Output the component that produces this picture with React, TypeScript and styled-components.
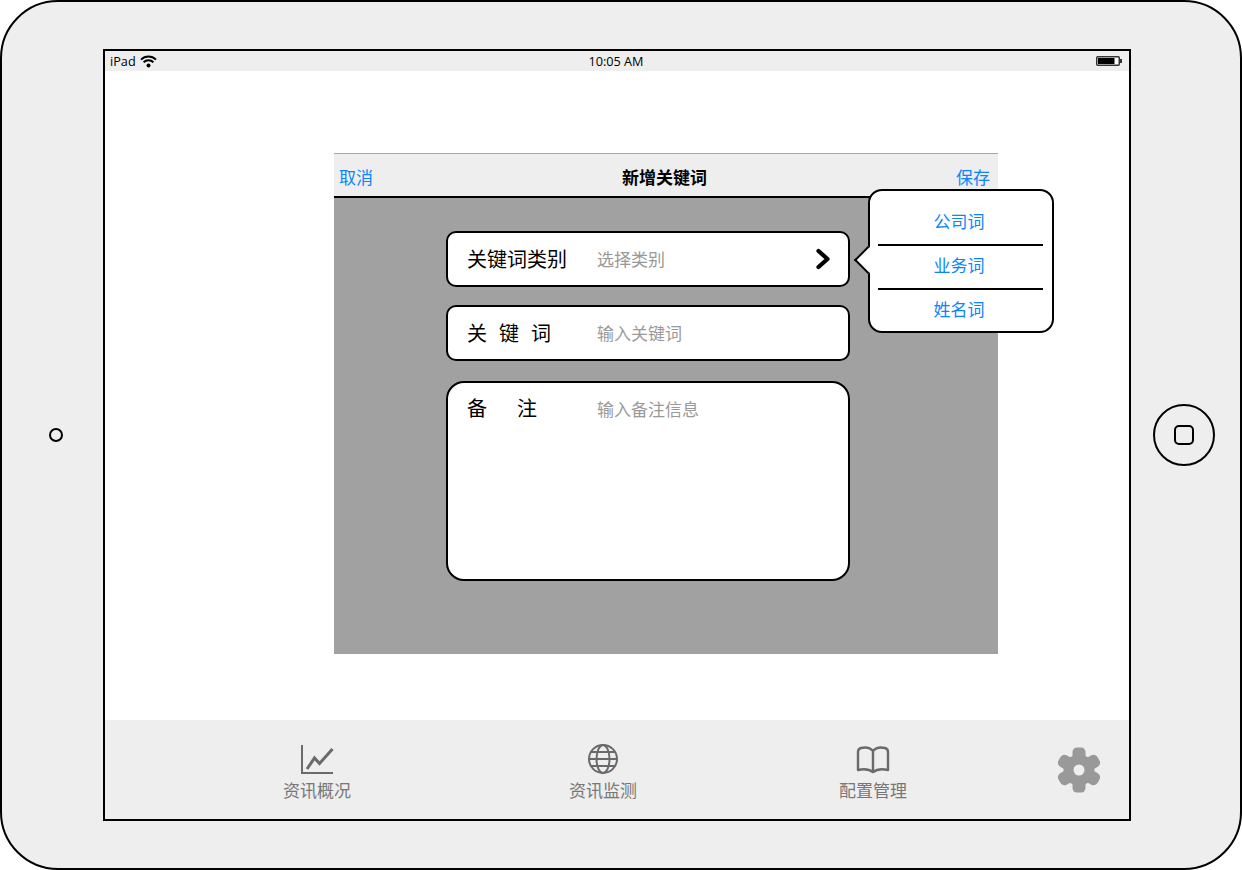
import React from "react";
import styled, { createGlobalStyle } from "styled-components";

const GlobalStyle = createGlobalStyle`
  html, body {
    margin: 0;
    padding: 0;
    background: #fff;
  }
  * {
    box-sizing: border-box;
  }
`;

const CJK = `"Noto Sans CJK SC", "Noto Sans", sans-serif`;

// Device frame
const Device = styled.div`
  width: 1242px;
  height: 870px;
  border: 2px solid #000;
  border-radius: 58px;
  background: #eee;
  display: grid;
  grid-template-columns: 101px 1028px 1fr;
  align-items: center;
  font-family: ${CJK};
  overflow: hidden;
`;

const SideLeft = styled.div`
  display: flex;
  justify-content: center;
  padding-left: 6px;
`;

const Hole = styled.div`
  width: 14px;
  height: 14px;
  border: 2px solid #000;
  border-radius: 50%;
`;

const SideRight = styled.div`
  display: flex;
  justify-content: center;
  padding-right: 4px;
`;

const HomeButton = styled.div`
  width: 62px;
  height: 62px;
  border: 2px solid #000;
  border-radius: 50%;
  display: flex;
  align-items: center;
  justify-content: center;
`;

const HomeSquare = styled.div`
  width: 20px;
  height: 20px;
  border: 2px solid #000;
  border-radius: 5px;
`;

const Screen = styled.div`
  position: relative;
  height: 772px;
  border: 2px solid #000;
  background: #fff;
  display: flex;
  flex-direction: column;
`;

// Status bar
const StatusBar = styled.div`
  height: 20px;
  background: #eee;
  padding: 0 7px 0 5px;
  display: grid;
  grid-template-columns: 1fr auto 1fr;
  align-items: center;
  font-family: "Open Sans", sans-serif;
  font-size: 12.7px;
  color: #000;
`;

const Carrier = styled.div`
  display: flex;
  align-items: center;
  gap: 4px;
`;

const Clock = styled.div`
  margin-right: 0;
`;

const BatteryWrap = styled.div`
  display: flex;
  justify-content: flex-end;
`;

// Main area
const Content = styled.div`
  flex: 1;
  padding: 82px 0 0 229px;
`;

const Dialog = styled.div`
  width: 664px;
  height: 501px;
  border-top: 1px solid #a6a6a6;
  background: #a1a1a1;
  display: flex;
  flex-direction: column;
`;

const DialogHeader = styled.div`
  height: 44px;
  flex: none;
  background: #eee;
  border-bottom: 2px solid #000;
  padding: 3px 8px 0 5px;
  display: flex;
  align-items: center;
  justify-content: space-between;
  font-size: 17px;
`;

const LinkText = styled.span`
  color: #0a84ff;
`;

const Title = styled.span`
  font-weight: 700;
  color: #000;
`;

const DialogBody = styled.div`
  flex: 1;
  padding: 33px 0 0 112px;
`;

const Field = styled.div<{ $tall?: boolean; $top?: number }>`
  width: 404px;
  height: ${({ $tall }) => ($tall ? "200px" : "56px")};
  margin-top: ${({ $top }) => $top ?? 0}px;
  padding: ${({ $tall }) => ($tall ? "10px 17px 0 19px" : "0 17px 0 19px")};
  background: #fff;
  border: 2px solid #000;
  border-radius: ${({ $tall }) => ($tall ? "18px" : "10px")};
  display: flex;
  align-items: ${({ $tall }) => ($tall ? "flex-start" : "center")};
`;

const Label = styled.span<{ $spacing?: number }>`
  width: 130px;
  flex: none;
  font-size: 20px;
  line-height: 30px;
  color: #000;
  letter-spacing: ${({ $spacing }) => $spacing ?? 0}px;
  white-space: nowrap;
`;

const Placeholder = styled.span`
  flex: 1;
  font-size: 17px;
  line-height: 32px;
  color: #999;
`;

// Popover menu over the dialog
const Popover = styled.div`
  position: absolute;
  left: 763px;
  top: 138px;
  width: 186px;
  height: 144px;
  padding: 11px 8px 0;
  background: #fff;
  border: 2px solid #000;
  border-radius: 14px;
`;

const PopoverArrow = styled.div`
  position: absolute;
  left: -12px;
  top: 59px;
  width: 20px;
  height: 20px;
  background: #fff;
  border-left: 2px solid #000;
  border-bottom: 2px solid #000;
  transform: rotate(45deg);
`;

const PopoverItem = styled.div<{ $last?: boolean }>`
  height: ${({ $last }) => ($last ? "38px" : "44px")};
  margin-right: 1px;
  padding-right: 3px;
  border-bottom: ${({ $last }) => ($last ? "none" : "2px solid #000")};
  display: flex;
  align-items: flex-start;
  justify-content: center;
  font-size: 17px;
  line-height: 38px;
  color: #0a84ff;
`;

// Tab bar
const TabBar = styled.div`
  height: 99px;
  flex: none;
  background: #eee;
  padding-left: 152px;
  display: flex;
  align-items: flex-start;
`;

const Tab = styled.div<{ $offset?: number }>`
  width: 120px;
  height: 100%;
  margin-left: ${({ $offset }) => $offset ?? 0}px;
  padding-top: 23px;
  display: flex;
  flex-direction: column;
  align-items: center;
  font-size: 17px;
  color: #777;
`;

const TabIcon = styled.svg`
  display: block;
  width: 34px;
  height: 32px;
`;

const TabLabel = styled.span`
  line-height: 24px;
  margin-top: 3px;
`;

const GearIcon = styled.svg`
  width: 44px;
  height: 46px;
  margin: 27px 0 0 124px;
  flex: none;
`;

const Wifi = () => (
  <svg width="17" height="13" viewBox="0 0 17 13">
    <path d="M1 4.6a10.6 10.6 0 0 1 15 0" fill="none" stroke="#000" strokeWidth="2" />
    <path d="M3.6 7.3a7 7 0 0 1 9.8 0" fill="none" stroke="#000" strokeWidth="2" />
    <circle cx="8.5" cy="10.6" r="2" fill="#000" />
  </svg>
);

const Battery = () => (
  <svg width="26" height="10" viewBox="0 0 26 10">
    <rect x="0.75" y="0.75" width="22.5" height="8.5" rx="1" fill="#fff" stroke="#333" strokeWidth="1.5" />
    <rect x="2" y="2" width="16.5" height="6" fill="#000" />
    <rect x="24" y="3" width="2" height="4" fill="#333" />
  </svg>
);

const Chevron = () => (
  <svg width="16" height="22" viewBox="0 0 16 22">
    <path d="M3.5 3 L12.5 11 L3.5 19" fill="none" stroke="#000" strokeWidth="4.2" strokeLinecap="round" strokeLinejoin="round" />
  </svg>
);

const ChartGlyph = () => (
  <TabIcon viewBox="0 0 34 32">
    <path d="M2 2 V30 H33" fill="none" stroke="#6a6a6a" strokeWidth="2" />
    <path d="M7 26 L14.5 15 L19.5 20.5 L32.5 6" fill="none" stroke="#6a6a6a" strokeWidth="3" />
  </TabIcon>
);

const GlobeGlyph = () => (
  <TabIcon viewBox="0 0 34 32">
    <g fill="none" stroke="#6a6a6a" strokeWidth="2">
      <circle cx="17" cy="16" r="14" />
      <ellipse cx="17" cy="16" rx="6.5" ry="14" />
      <path d="M3 16 H31 M5 9 H29 M5 23 H29" />
    </g>
  </TabIcon>
);

const BookGlyph = () => (
  <TabIcon viewBox="0 0 34 32">
    <path
      d="M17 8 C14 4.5 9 4 5 5 C3 5.5 2 7 2 9 V27 C8 25.5 13 26 17 29 C21 26 26 25.5 32 27 V9 C32 7 31 5.5 29 5 C25 4 20 4.5 17 8 V28"
      fill="none"
      stroke="#6a6a6a"
      strokeWidth="2.4"
      strokeLinejoin="round"
    />
  </TabIcon>
);

const Gear = () => (
  <GearIcon viewBox="0 0 44 46">
    <g fill="#999" transform="translate(22 23)">
      <circle r="15.5" />
      {[0, 60, 120, 180, 240, 300].map((angle) => (
        <rect key={angle} x="-6.5" y="-22.5" width="13" height="14" rx="4.5" transform={`rotate(${angle})`} />
      ))}
    </g>
    <circle cx="22" cy="23" r="5.5" fill="#eee" />
  </GearIcon>
);

export default function App() {
  return (
    <>
      <GlobalStyle />
      <Device>
        <SideLeft>
          <Hole />
        </SideLeft>
        <Screen>
          <StatusBar>
            <Carrier>
              iPad
              <Wifi />
            </Carrier>
            <Clock>10:05 AM</Clock>
            <BatteryWrap>
              <Battery />
            </BatteryWrap>
          </StatusBar>
          <Content>
            <Dialog>
              <DialogHeader>
                <LinkText>取消</LinkText>
                <Title>新增关键词</Title>
                <LinkText>保存</LinkText>
              </DialogHeader>
              <DialogBody>
                <Field>
                  <Label>关键词类别</Label>
                  <Placeholder>选择类别</Placeholder>
                  <Chevron />
                </Field>
                <Field $top={18}>
                  <Label $spacing={12}>关键词</Label>
                  <Placeholder>输入关键词</Placeholder>
                </Field>
                <Field $tall $top={20}>
                  <Label $spacing={30}>备注</Label>
                  <Placeholder>输入备注信息</Placeholder>
                </Field>
              </DialogBody>
            </Dialog>
          </Content>
          <Popover>
            <PopoverArrow />
            <PopoverItem>公司词</PopoverItem>
            <PopoverItem>业务词</PopoverItem>
            <PopoverItem $last>姓名词</PopoverItem>
          </Popover>
          <TabBar>
            <Tab>
              <ChartGlyph />
              <TabLabel>资讯概况</TabLabel>
            </Tab>
            <Tab $offset={166}>
              <GlobeGlyph />
              <TabLabel>资讯监测</TabLabel>
            </Tab>
            <Tab $offset={150}>
              <BookGlyph />
              <TabLabel>配置管理</TabLabel>
            </Tab>
            <Gear />
          </TabBar>
        </Screen>
        <SideRight>
          <HomeButton>
            <HomeSquare />
          </HomeButton>
        </SideRight>
      </Device>
    </>
  );
}
